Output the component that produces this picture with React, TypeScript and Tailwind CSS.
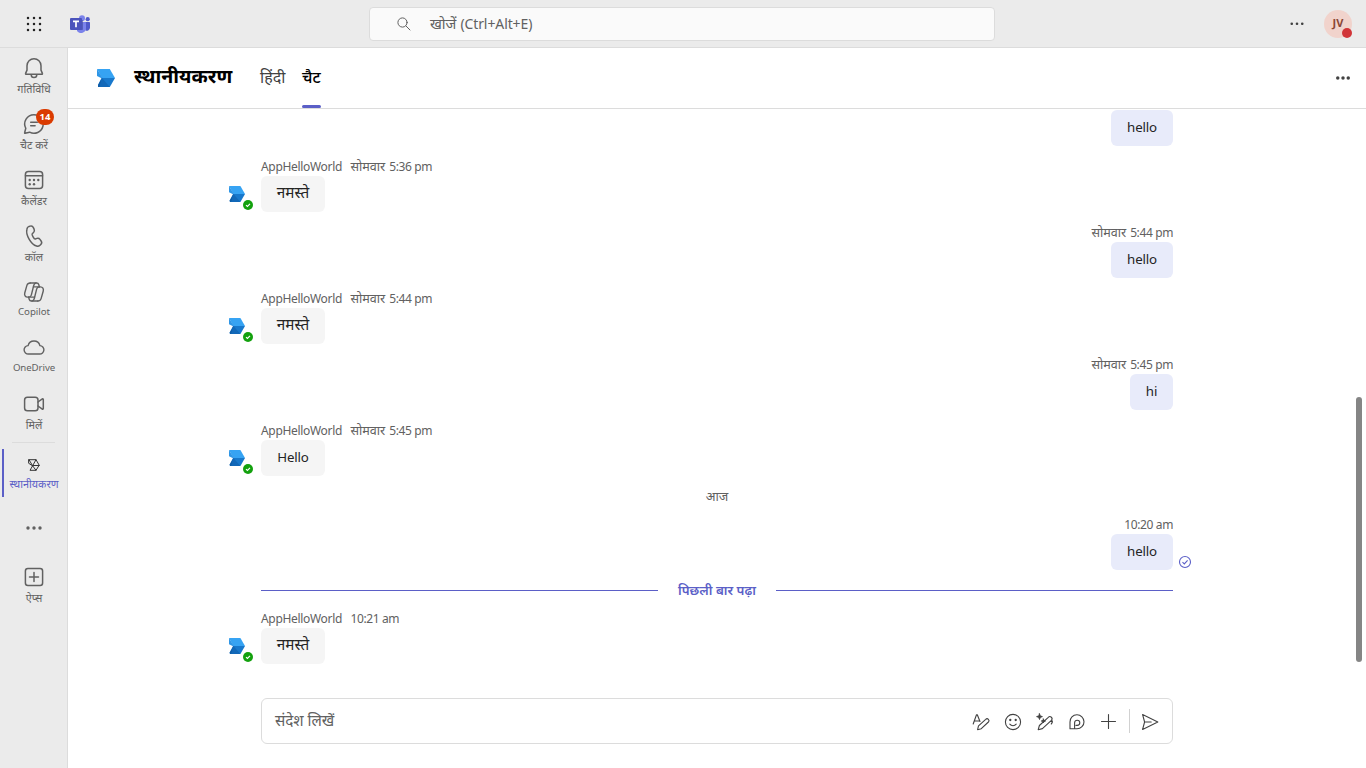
import React from "react";

type IconProps = { className?: string; children: React.ReactNode; box?: string; w?: number };

function Icon({ className = "size-5", children, box = "0 0 20 20", w = 1.15 }: IconProps) {
  return (
    <svg viewBox={box} className={`shrink-0 ${className}`} fill="none" stroke="currentColor" strokeWidth={w} strokeLinecap="round" strokeLinejoin="round">
      {children}
    </svg>
  );
}

function Bell() {
  return (
    <Icon className="size-6" box="0 0 24 24" w={1.5}>
      <path d="M12 2.75a7 7 0 0 0-7 7v4.4l-1.4 3.2a.7.7 0 0 0 .65 1h15.5a.7.7 0 0 0 .65-1L19 14.15v-4.4a7 7 0 0 0-7-7Z" />
      <path d="M9.2 18.7a2.8 2.8 0 0 0 5.6 0" />
    </Icon>
  );
}
function Chat() {
  return (
    <Icon className="size-6" box="0 0 24 24" w={1.5}>
      <path d="M12 2.75a9.25 9.25 0 1 1-4.4 17.4L3 21.25a.35.35 0 0 1-.4-.45l1.2-4.5A9.25 9.25 0 0 1 12 2.75Z" />
      <path d="M8.7 10.3h6.6M8.7 13.7h4.4" />
    </Icon>
  );
}
function CalendarIcon() {
  return (
    <Icon className="size-6" box="0 0 24 24" w={1.5}>
      <rect x="3.4" y="3.4" width="17.2" height="17.2" rx="3" />
      <path d="M3.5 7.7h17" />
      <g fill="currentColor" stroke="none">
        <circle cx="7.7" cy="12" r="1.2" />
        <circle cx="12" cy="12" r="1.2" />
        <circle cx="16.3" cy="12" r="1.2" />
        <circle cx="7.7" cy="16.2" r="1.2" />
        <circle cx="12" cy="16.2" r="1.2" />
      </g>
    </Icon>
  );
}
function Phone() {
  return (
    <Icon className="size-6" box="0 0 24 24" w={1.5}>
      <path d="M7.06 2.42 8.1 2.1a2.7 2.7 0 0 1 3.26 1.5l.8 1.8a2.7 2.7 0 0 1-.62 3.06L10.2 9.71c-.3.3-.1 1.4.85 3.05s1.75 2.3 2.2 2.15l1.75-.53a2.7 2.7 0 0 1 2.97 1l1.14 1.58a2.7 2.7 0 0 1-.34 3.54l-.79.75a3.5 3.5 0 0 1-3.4.83c-2.77-.78-5.26-3.12-7.49-7.02S4.2 8 4.9 5.2a3.5 3.5 0 0 1 2.16-2.78Z" />
    </Icon>
  );
}
function Copilot() {
  return (
    <Icon className="size-6" box="0 0 24 24" w={1.4}>
      <path d="M8.2 3h6.4c1.2 0 1.9.6 2.2 1.7l.6 2.2" />
      <path d="M8.2 3C6.6 3 5.400 3.900 4.900 5.400L2.800 12.700c-.7 2.400.5 4.400 2.800 4.400h1.200c1.300 0 2.100-.8 2.500-2l2.400-9.600C12.100 4 12.800 3 14 3" />
      <path d="M15.8 21H9.400c-1.200 0-1.900-.6-2.200-1.700l-.6-2.200" />
      <path d="M15.800 21c1.600 0 2.800-.9 3.300-2.400l2.100-7.300c.7-2.400-.5-4.400-2.800-4.400h-1.200c-1.300 0-2.100.8-2.500 2l-2.400 9.600c-.4 1.500-1.100 2.500-2.300 2.500" />
      <path d="M11.500 6.900h6M6.500 17.100h6" />
    </Icon>
  );
}
function Cloud() {
  return (
    <Icon className="size-6" box="0 0 24 24" w={1.4}>
      <path d="M6.5 18a4.2 4.2 0 0 1-.4-8.4A6.1 6.1 0 0 1 17.9 9.6 4.2 4.2 0 0 1 17.5 18Z" />
    </Icon>
  );
}
function Video() {
  return (
    <Icon className="size-6" box="0 0 24 24" w={1.5}>
      <rect x="2.6" y="5.2" width="13.4" height="13.6" rx="2.8" />
      <path d="m16 10 4.3-3.1a.6.6 0 0 1 1 .5v9.2a.6.6 0 0 1-1 .5L16 14" />
    </Icon>
  );
}
function AppOutline() {
  return (
    <Icon className="size-4 text-[#333]" box="0 0 16 16" w={1}>
      <path d="M3 2.700h7l3.200 5.500-3.200 5.100H4l2.600-4.500L3 6.500ZM6.600 8.800 10 2.700M3 2.700l3.600 6.100M6.600 8.500h6.600M6.600 8.800l3.400 4.500" />
    </Icon>
  );
}
function Apps() {
  return (
    <Icon className="size-6" box="0 0 24 24" w={1.5}>
      <rect x="3.4" y="3.4" width="17.2" height="17.2" rx="2.5" />
      <path d="M12 7.5v9M7.5 12h9" />
    </Icon>
  );
}
function Dots({ className, r = 1.7 }: { className: string; r?: number }) {
  return (
    <svg viewBox="0 0 16 4" className={className} fill="currentColor">
      <circle cx="2" cy="2" r={r} />
      <circle cx="8" cy="2" r={r} />
      <circle cx="14" cy="2" r={r} />
    </svg>
  );
}
function Waffle() {
  return (
    <svg viewBox="0 0 16 16" className="size-4 text-[#242424]" fill="currentColor">
      {[2, 8, 14].map((y) => [2, 8, 14].map((x) => <circle key={`${x}-${y}`} cx={x} cy={y} r="1.25" />))}
    </svg>
  );
}
function TeamsLogo() {
  return (
    <svg viewBox="0 0 20 18" className="h-[18px] w-5">
      <circle cx="12" cy="3.2" r="3" fill="#7b83eb" />
      <circle cx="17.7" cy="4.2" r="2.1" fill="#5059c9" />
      <path d="M14 7h5.3c.5 0 .7.3.7.7v4.8a3.3 3.3 0 0 1-4.5 3Z" fill="#5059c9" />
      <path d="M7 7h8.3c.5 0 .7.3.7.7V13a5 5 0 0 1-9 3Z" fill="#7b83eb" />
      <path d="M7 5h5c.6 0 1 .4 1 1v8c0 .6-.4 1-1 1H7Z" fill="#393f94" opacity=".55" />
      <rect x="0" y="3" width="12" height="12" rx="1" fill="#4b53bc" />
      <path d="M3 6.3h6M6 6.3v6" stroke="#fff" strokeWidth="1.7" />
    </svg>
  );
}
function AppLogo({ className }: { className: string }) {
  return (
    <svg viewBox="0 0 18 18" className={className} preserveAspectRatio="none">
      <path d="M0 0h12.8L18 9H5Z" fill="#36a3f3" />
      <path d="M0 0v7l4 2h1.500Z" fill="#2f96e6" />
      <path d="M4.500 9H18l-5.200 9H1v-2Z" fill="#1878cc" />
      <path d="M5 9 1 16v2h2Z" fill="#0f5da8" />
      <path d="M5 9 2.500 18h10.300Z" fill="#1268b8" />
    </svg>
  );
}

type NavProps = { label: string; icon: React.ReactNode; textClass?: string; badge?: string };

function NavItem({ label, icon, textClass = "mt-px text-[10.8px]", badge }: NavProps) {
  return (
    <div className="relative flex h-14 flex-col items-center pt-2 text-[#616161]">
      {icon}
      <span className={`leading-[16px] whitespace-nowrap ${textClass}`}>{label}</span>
      {badge && (
        <span className="absolute top-[5px] left-[35px] flex h-4 w-[18px] items-center justify-center rounded-full bg-[#da3b01] text-[9.5px] font-bold text-white">{badge}</span>
      )}
    </div>
  );
}

function Stamp({ day, clock }: { day?: string; clock: string }) {
  return (
    <span className="flex gap-1 pb-px">
      {day && <span className="text-[12.6px]">{day}</span>}
      <span className="text-[12px] tracking-[-0.38px]">{clock}</span>
    </span>
  );
}

function Received({ day, clock, text, latin = false }: { day?: string; clock: string; text: string; latin?: boolean }) {
  return (
    <div className="-ml-8 flex pt-3">
      <div className="relative h-[54px] w-8 shrink-0">
        <AppLogo className="mt-7 h-4 w-4" />
        <svg viewBox="0 0 10 10" className="absolute top-[42px] left-[14px] size-[10px]">
          <circle cx="5" cy="5" r="5" fill="#13a10e" />
          <path d="m3 5.2 1.4 1.3L7 3.8" fill="none" stroke="#fff" strokeWidth="1.1" />
        </svg>
      </div>
      <div>
        <div className="flex h-[18px] items-center gap-2 leading-4 whitespace-nowrap text-[#616161]">
          <span className="w-[81.5px] pb-px text-[12px] tracking-[-0.32px]">AppHelloWorld</span>
          <Stamp day={day} clock={clock} />
        </div>
        <div className={`flex h-9 w-16 items-center justify-center rounded-md bg-[#f5f5f5] text-[#242424] ${latin ? "pb-px text-[13.3px] tracking-[-0.15px]" : "pb-[3px] text-[15.3px]"}`}>{text}</div>
      </div>
    </div>
  );
}

function Sent({ day, clock, text, width = "w-[62px]", seen = false }: { day?: string; clock?: string; text: string; width?: string; seen?: boolean }) {
  return (
    <div className={`relative flex flex-col items-end ${clock ? "pt-3" : ""}`}>
      {clock && (
        <div className="flex h-[18px] items-center leading-4 whitespace-nowrap text-[#616161]">
          <Stamp day={day} clock={clock} />
        </div>
      )}
      <div className={`flex h-9 items-center justify-center rounded-md bg-[#e8ebfa] pb-px text-[13.3px] tracking-[-0.15px] text-[#242424] ${width}`}>{text}</div>
      {seen && (
        <svg viewBox="0 0 14 14" className="absolute -right-[19px] bottom-px size-[14px]" fill="none" stroke="#5b5fc7" strokeWidth="1.1">
          <circle cx="7" cy="7" r="5.5" />
          <path d="m4.5 7.2 1.8 1.7 3.3-3.5" />
        </svg>
      )}
    </div>
  );
}

export default function App() {
  return (
    <div className="flex h-screen w-screen flex-col overflow-hidden bg-white font-['Noto_Sans','Noto_Sans_Devanagari',sans-serif] text-[#242424]">
      <header className="flex h-12 shrink-0 items-center border-b border-[#dcdcdc] bg-[#ebebeb]">
        <div className="flex w-[369px] shrink-0 items-center gap-7 pl-[26px]">
          <Waffle />
          <TeamsLogo />
        </div>
        <div className="flex h-[34px] w-[626px] items-center rounded border border-[#dcdcdc] bg-[#fafafa] pl-[26px] text-[#616161]">
          <Icon className="size-4" box="0 0 16 16" w={1}>
            <circle cx="6.5" cy="6.5" r="4.6" />
            <path d="m10 10 4 4" />
          </Icon>
          <span className="ml-[18px] flex items-center gap-1">
            <span className="text-[14.5px]">खोजें</span>
            <span className="text-[14px] tracking-[-0.1px]">(Ctrl+Alt+E)</span>
          </span>
        </div>
        <Dots className="ml-auto h-[3.5px] w-[14px] text-[#424242]" r={1.5} />
        <div className="relative mr-[14px] ml-5 flex size-7 items-center justify-center rounded-full bg-[#f1d3cc] text-[11px] font-bold text-[#8a4636]">
          JV
          <span className="absolute right-0 bottom-0 size-[10px] rounded-full bg-[#d13438]" />
        </div>
      </header>
      <div className="flex min-h-0 flex-1">
        <nav className="flex w-[68px] shrink-0 flex-col border-r border-[#dcdcdc] bg-[#ebebeb] pl-px">
          <NavItem label="गतिविधि" icon={<Bell />} />
          <NavItem label="चैट करें" icon={<Chat />} badge="14" />
          <NavItem label="कैलेंडर" icon={<CalendarIcon />} />
          <NavItem label="कॉल" icon={<Phone />} />
          <NavItem label="Copilot" icon={<Copilot />} textClass="text-[9.7px] tracking-[-0.05px]" />
          <NavItem label="OneDrive" icon={<Cloud />} textClass="text-[9.7px] tracking-[-0.1px]" />
          <NavItem label="मिलें" icon={<Video />} />
          <div className="mt-0.5 mr-3 ml-[11px] h-px bg-[#dcdcdc]" />
          <div className="mt-[6px] ml-px flex h-12 flex-col items-center border-l-2 border-[#5b5fc7] pt-2 pr-[3px] text-[#5b5fc7]">
            <AppOutline />
            <span className="mt-[3px] text-[10.8px] leading-4 whitespace-nowrap">स्थानीयकरण</span>
          </div>
          <div className="flex h-[60px] items-center justify-center pt-0.5 text-[#616161]">
            <Dots className="h-1 w-4" />
          </div>
          <NavItem label="ऐप्स" icon={<Apps />} />
        </nav>
        <main className="flex min-w-0 flex-1 flex-col">
          <div className="flex h-[61px] shrink-0 items-stretch border-b border-[#dcdcdc] pl-[29px]">
            <AppLogo className="mt-[21px] h-[18px] w-[18px]" />
            <h1 className="ml-[19px] flex h-[55px] w-[98px] items-center text-[19.6px] font-bold whitespace-nowrap text-black">स्थानीयकरण</h1>
            <span className="ml-[28px] flex h-[57px] w-[26px] items-center text-[16px] text-[#424242]">हिंदी</span>
            <div className="ml-4 flex w-[19px] flex-col">
              <span className="flex h-[57px] items-center text-[16px] font-medium text-black">चैट</span>
              <span className="h-[3px] rounded-full bg-[#5b5fc7]" />
            </div>
            <Dots className="mt-7 mr-4 ml-auto h-1 w-[14px] text-[#424242]" r={2} />
          </div>
          <div className="flex min-h-0 flex-1 justify-end pr-1">
            <div className="mr-[183px] flex w-[912px] shrink-0 flex-col pt-px">
              <Sent text="hello" />
              <Received day="सोमवार" clock="5:36 pm" text="नमस्ते" />
              <Sent day="सोमवार" clock="5:44 pm" text="hello" />
              <Received day="सोमवार" clock="5:44 pm" text="नमस्ते" />
              <Sent day="सोमवार" clock="5:45 pm" text="hi" width="w-[43px]" />
              <Received day="सोमवार" clock="5:45 pm" text="Hello" latin />
              <div className="flex h-7 items-end justify-center text-[12.8px] leading-4 text-[#616161]">आज</div>
              <Sent clock="10:20 am" text="hello" seen />
              <div className="flex h-7 items-end gap-5 text-[13.2px] leading-4 font-semibold text-[#5b5fc7]">
                <span className="mb-[7px] h-px flex-1 bg-[#5b5fc7]" />
                <span className="flex w-[78px] justify-center whitespace-nowrap">पिछली बार पढ़ा</span>
                <span className="mb-[7px] h-px flex-1 bg-[#5b5fc7]" />
              </div>
              <Received clock="10:21 am" text="नमस्ते" />
              <div className="mt-[34px] flex h-[46px] items-center rounded-md border border-[#dcdcdc] pr-3 pl-[13px] text-[#424242]">
                <span className="mr-auto pb-0.5 text-[15.2px] text-[#616161]">संदेश लिखें</span>
                <div className="flex items-center gap-3 pt-0.5">
                  <Icon w={1.1}>
                    <path d="m2.2 12 3.3-9.2h.8l2.7 6.7M3.4 9h4.7" />
                    <path d="m6.6 17.7.9-3.8 7.2-6.6a1.9 1.9 0 0 1 2.7 2.7l-7.1 6.7Z" />
                  </Icon>
                  <Icon w={1.1}>
                    <circle cx="10" cy="10" r="7.6" />
                    <path d="M6.8 12.2a4.2 4.2 0 0 0 6.4 0" />
                    <circle cx="7.3" cy="8" r=".6" fill="currentColor" />
                    <circle cx="12.7" cy="8" r=".6" fill="currentColor" />
                  </Icon>
                  <Icon w={1.1}>
                    <path d="m3.2 17.7 1.2-4.2 8.9-8.2a2.15 2.15 0 0 1 3.1 3l-9 8.3ZM16.6 8.2c1.3 1.3 1.1 2.3-.3 3.8" />
                    <path d="M4.500 1.800 5.300 3.900l2.100.700-2.100.8-.8 2.100-.8-2.100-2.100-.8 2.100-.7ZM8.400 7l.6 1.500 1.500.500-1.500.500-.6 1.500-.6-1.500L6.300 9l1.500-.5Z" fill="currentColor" strokeWidth=".9" />
                  </Icon>
                  <Icon w={1.1}>
                    <path d="M3 16.8V10a7 7 0 1 1 7 6.8Z" />
                    <path d="M7.6 16.5v-5.7a2.6 2.6 0 1 1 2.6 2.6H9" />
                  </Icon>
                  <Icon w={1.1}>
                    <path d="M9.5 2.5v14M2.5 9.5h14" />
                  </Icon>
                </div>
                <span className="ml-[10px] h-6 w-px bg-[#d1d1d1]" />
                <Icon className="mt-0.5 ml-[10px] size-5" w={1.1}>
                  <path d="m2.6 2.6 15.2 7.4-15.2 7.4 2-7.4ZM4.6 10h6.6" />
                </Icon>
              </div>
            </div>
            <div className="mt-72 h-[265px] w-1.5 rounded-full bg-[#858585]" />
          </div>
        </main>
      </div>
    </div>
  );
}
